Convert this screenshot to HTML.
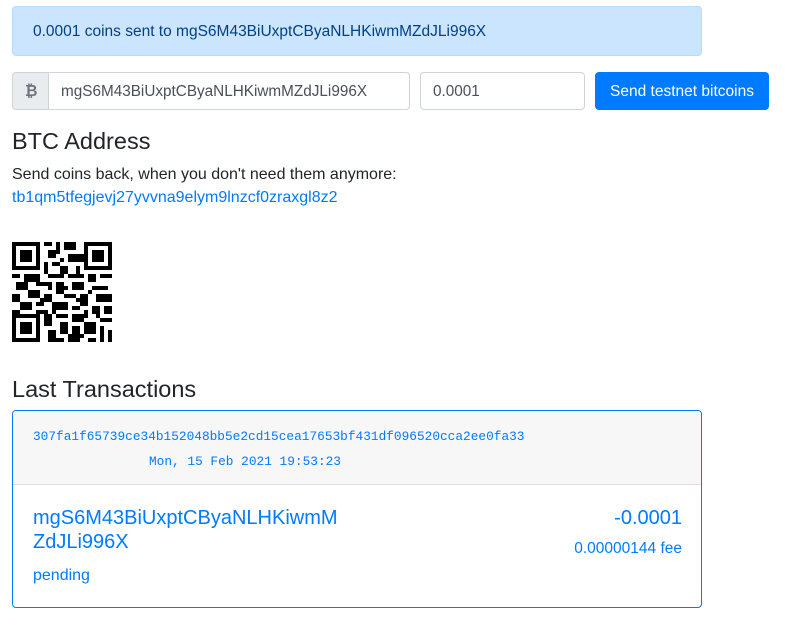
<!DOCTYPE html><html><head><style>
body{margin:0;width:804px;height:619px;background:#fff;font-family:"Liberation Sans",sans-serif;color:#212529;position:relative;overflow:hidden}
.a{position:absolute;white-space:nowrap}
.in{position:absolute;border:1px solid #ced4da;border-radius:4px;box-sizing:border-box;font-size:15.3px;color:#495057;padding:0 12px;line-height:38px}
.m{font-family:"Liberation Mono",monospace;font-size:12.8px;color:#007bff}
</style></head><body>
<div class="a" style="left:12px;top:6px;width:690px;height:50px;box-sizing:border-box;background:#cce5ff;border:1px solid #b8daff;border-radius:4px;color:#004085;font-size:15.5px;line-height:50px;padding-left:20px">0.0001 coins sent to mgS6M43BiUxptCByaNLHKiwmMZdJLi996X</div>
<div class="in" style="left:12px;top:72px;width:37px;height:38px;background:#e9ecef;border-radius:4px 0 0 4px;font-weight:bold;color:#6c757d;padding:0 0 0 12px">₿</div>
<div class="in" style="left:48px;top:72px;width:362px;height:38px;border-radius:0 4px 4px 0">mgS6M43BiUxptCByaNLHKiwmMZdJLi996X</div>
<div class="in" style="left:420px;top:72px;width:165px;height:38px">0.0001</div>
<div class="a" style="left:595px;top:72px;width:174px;height:38px;background:#007bff;border-radius:4px;color:#fff;font-size:15.5px;line-height:40px;text-align:center">Send testnet bitcoins</div>
<div class="a" style="left:12px;top:128px;font-size:23.5px;font-weight:500">BTC Address</div>
<div class="a" style="left:12px;top:166px;font-size:16px">Send coins back, when you don't need them anymore:</div>
<div class="a" style="left:12px;top:189px;font-size:16px;color:#007bff">tb1qm5tfegjevj27yvvna9elym9lnzcf0zraxgl8z2</div>
<svg class="a" style="left:12px;top:242px" width="100" height="100" viewBox="0 0 25 25" shape-rendering="crispEdges">
<g fill="#000">
<path d="M0 0h7v7h-7zM1 1v5h5v-5zM2 2h3v3h-3z" fill-rule="evenodd"/>
<path d="M18 0h7v7h-7zM19 1v5h5v-5zM20 2h3v3h-3z" fill-rule="evenodd"/>
<path d="M0 18h7v7h-7zM1 19v5h5v-5zM2 20h3v3h-3z" fill-rule="evenodd"/>
<path d="M8 0h2v1h-2zM11 0h1v3h-1zM13 0h3v2h-3zM9 2h2v2h-2zM14 3h3v2h-3zM8 5h1v3h-1zM10 5h2v1h-2zM12 6h2v2h-2zM16 6h1v2h-1zM0 8h2v1h-2zM3 8h4v2h-4zM9 8h3v1h-3zM14 8h4v1h-4zM19 8h2v2h-2zM22 8h3v1h-3zM1 10h3v2h-3zM6 10h3v1h-3zM11 10h2v3h-2zM15 10h3v2h-3zM20 11h4v1h-4zM0 13h2v2h-2zM4 12h3v2h-3zM8 13h2v2h-2zM13 13h3v1h-3zM17 13h2v3h-2zM21 13h4v2h-4zM2 15h3v2h-3zM6 15h2v1h-2zM10 15h4v2h-4zM15 16h2v1h-2zM20 16h2v2h-2zM23 16h2v2h-2zM0 17h2v1h-2zM6 17h3v1h-3zM8 18h2v3h-2zM11 18h3v1h-3zM15 18h3v2h-3zM18 20h3v3h-3zM22 19h3v1h-3zM12 20h2v3h-2zM9 22h2v3h-2zM15 21h2v2h-2zM22 21h1v4h-1zM14 23h3v2h-3zM19 24h2v1h-2zM24 22h1v3h-1zM17 3h1v2h-1zM9 10h1v2h-1zM13 11h1v1h-1zM7 14h1v1h-1zM19 12h1v1h-1zM16 14h1v1h-1zM10 17h1v1h-1zM12 8h1v1h-1zM10 3h1v1h-1zM12 4h1v1h-1zM18 17h1v2h-1zM21 18h1v1h-1zM17 23h1v1h-1zM11 24h2v1h-2z"/>
</g></svg>
<div class="a" style="left:12px;top:376px;font-size:23.5px;font-weight:500">Last Transactions</div>
<div class="a" style="left:12px;top:410px;width:690px;height:198px;box-sizing:border-box;border:1px solid #007bff;border-radius:4px;overflow:hidden">
<div style="height:73px;background:#f7f7f7;border-bottom:1px solid #dfdfdf"></div>
</div>
<div class="a m" style="left:33px;top:429px">307fa1f65739ce34b152048bb5e2cd15cea17653bf431df096520cca2ee0fa33</div>
<div class="a m" style="left:149px;top:454px">Mon, 15 Feb 2021 19:53:23</div>
<div class="a" style="left:33px;top:506px;font-size:20px;line-height:24px;color:#007bff;font-weight:500">mgS6M43BiUxptCByaNLHKiwmM<br>ZdJLi996X</div>
<div class="a" style="left:33px;top:567px;font-size:16px;color:#007bff">pending</div>
<div class="a" style="right:122px;top:507px;font-size:20px;color:#007bff;font-weight:500">-0.0001</div>
<div class="a" style="right:122px;top:540px;font-size:15.5px;color:#007bff">0.00000144 fee</div>
</body></html>
